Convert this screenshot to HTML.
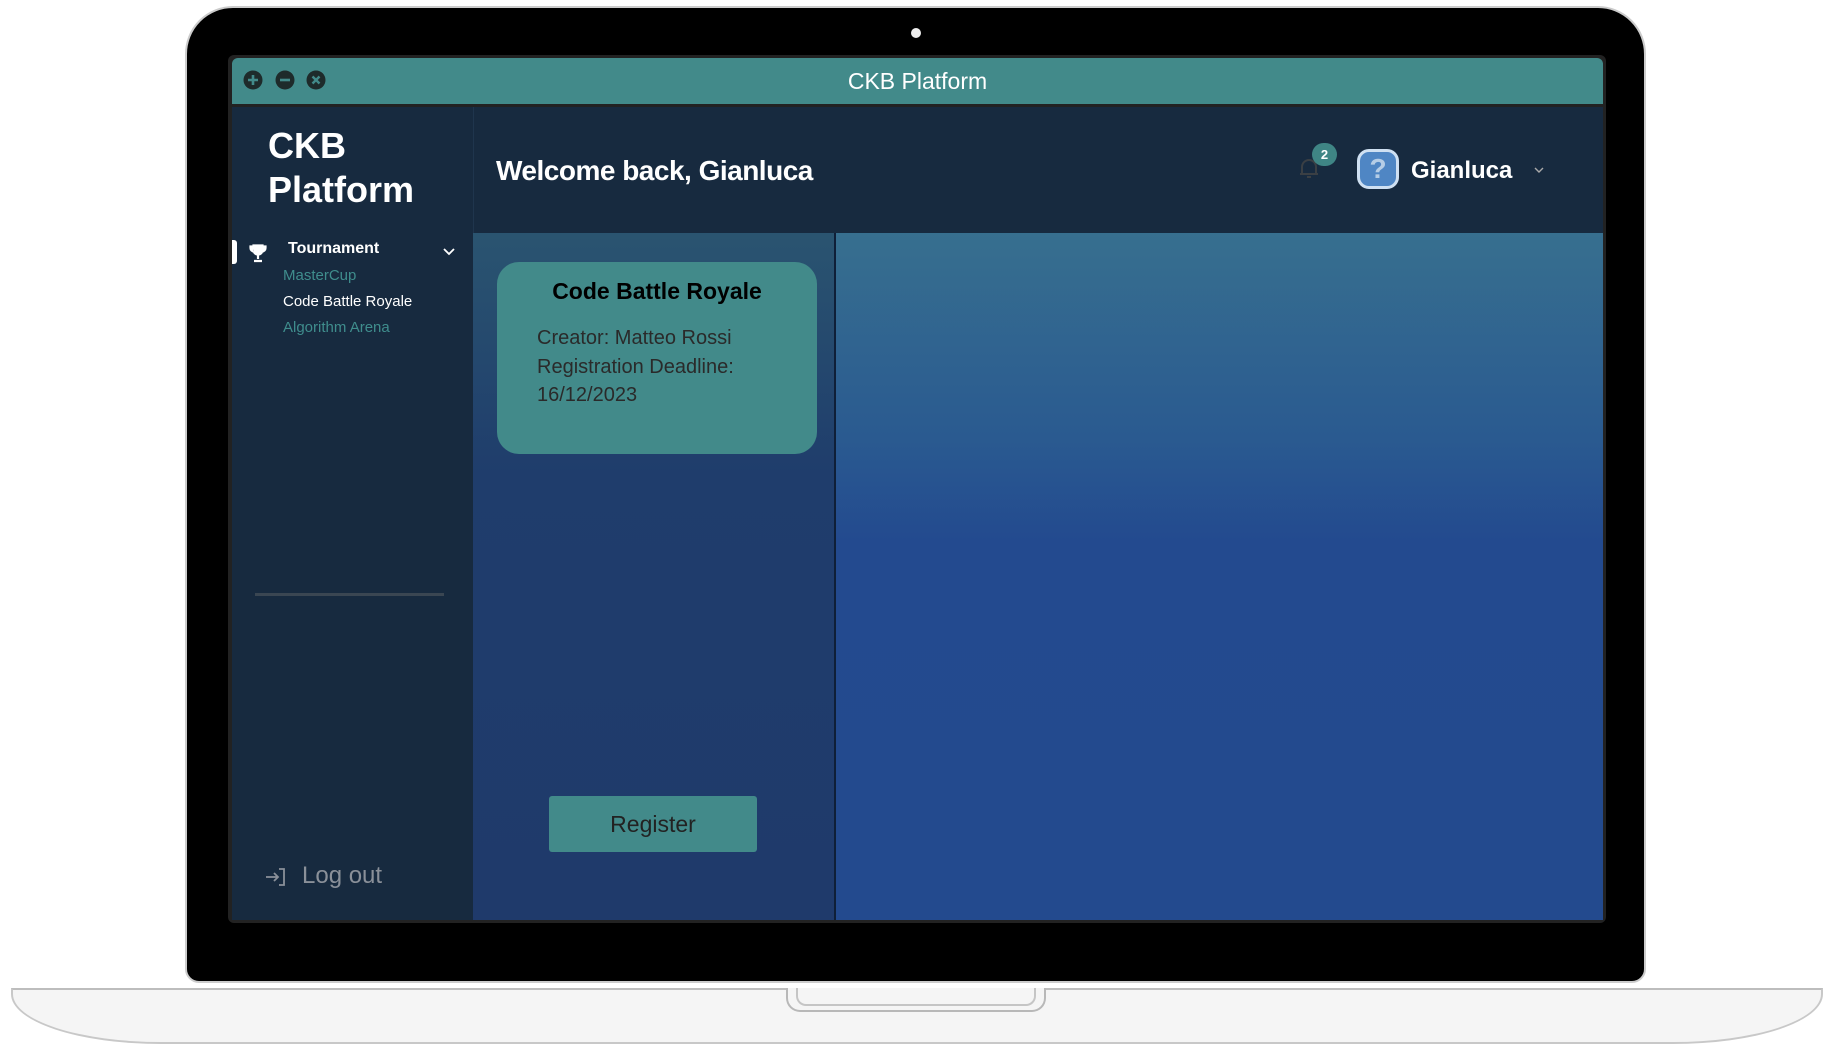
<!DOCTYPE html>
<html><head><meta charset="utf-8"><style>
*{margin:0;padding:0;box-sizing:border-box}
body{width:1832px;height:1046px;background:#fff;position:relative;overflow:hidden;font-family:"Liberation Sans",sans-serif}
.abs{position:absolute}
</style></head><body>
<div class="abs" style="left:11px;top:988px;width:1812px;height:56px;background:#f5f5f5;border:2px solid #c8c8c8;border-top:2px solid #bdbdbd;border-radius:0 0 150px 150px/0 0 50px 50px"></div>
<div class="abs" style="left:786px;top:988px;width:260px;height:24px;border:2px solid #b8b8b8;border-top:none;border-radius:0 0 14px 14px;background:#f5f5f5"></div>
<div class="abs" style="left:796px;top:988px;width:240px;height:18px;border:2px solid #c5c5c5;border-top:none;border-radius:0 0 10px 10px"></div>
<div class="abs" style="left:185px;top:6px;width:1461px;height:977px;background:#000;border-radius:48px 48px 14px 14px;border:2px solid #ccc"></div>
<div class="abs" style="left:911px;top:28px;width:10px;height:10px;border-radius:50%;background:#eee"></div>
<div class="abs" style="left:228px;top:55px;width:1378px;height:868px;background:#222;border-radius:6px"></div>
<div class="abs" style="left:232px;top:58px;width:1371px;height:46px;background:#428a8a;border-radius:6px 6px 0 0"></div>
<div class="abs" style="left:232px;top:58px;width:1371px;height:46px;color:#fff;font-size:23px;text-align:center;line-height:46px">CKB Platform</div>
<svg class="abs" style="left:242px;top:69px" width="90" height="22" viewBox="0 0 90 22">
<circle cx="11" cy="11" r="9.5" fill="#1e2b2b"/><path d="M11 6v10M6 11h10" stroke="#428a8a" stroke-width="2.6"/>
<circle cx="43" cy="11" r="9.5" fill="#1e2b2b"/><path d="M38 11h10" stroke="#428a8a" stroke-width="2.6"/>
<circle cx="74" cy="11" r="9.5" fill="#1e2b2b"/><path d="M70.5 7.5l7 7M77.5 7.5l-7 7" stroke="#428a8a" stroke-width="2.4"/>
</svg>
<div class="abs" style="left:232px;top:107px;width:241px;height:813px;background:#172a3f"></div>
<div class="abs" style="left:268px;top:124px;color:#fff;font-weight:bold;font-size:36px;line-height:44px">CKB<br>Platform</div>
<div class="abs" style="left:232px;top:240px;width:5px;height:24px;background:#fff;border-radius:0 3px 3px 0"></div>
<svg class="abs" style="left:248px;top:243px" width="20" height="20" viewBox="0 0 20 20"><path d="M5 2h10v5a5 5 0 0 1-10 0z M5 3H2v2a4 4 0 0 0 4 4 M15 3h3v2a4 4 0 0 1-4 4" fill="#fff" stroke="#fff" stroke-width="1.2"/><path d="M10 12v4M6 18h8" stroke="#fff" stroke-width="2.2"/></svg>
<div class="abs" style="left:288px;top:240px;color:#fff;font-weight:bold;font-size:16px">Tournament</div>
<svg class="abs" style="left:442px;top:247px" width="14" height="10" viewBox="0 0 14 10"><path d="M2 2l5 5 5-5" stroke="#fff" stroke-width="1.8" fill="none"/></svg>
<div class="abs" style="left:283px;top:267px;color:#3f8d8d;font-size:15px">MasterCup</div>
<div class="abs" style="left:283px;top:293px;color:#fff;font-size:15px">Code Battle Royale</div>
<div class="abs" style="left:283px;top:319px;color:#3f8d8d;font-size:15px">Algorithm Arena</div>
<div class="abs" style="left:255px;top:593px;width:189px;height:3px;background:#3a4652"></div>
<svg class="abs" style="left:264px;top:866px" width="24" height="22" viewBox="0 0 24 22"><path d="M2 11h12M10 7l4 4-4 4M15 3h5v16h-5" stroke="#8a9099" stroke-width="1.8" fill="none"/></svg>
<div class="abs" style="left:302px;top:862px;color:#8a9099;font-size:24px">Log out</div>
<div class="abs" style="left:473px;top:107px;width:1130px;height:126px;background:#172a3f;border-left:1px solid #1f354d"></div>
<div class="abs" style="left:496px;top:155px;color:#fff;font-weight:bold;font-size:28px;letter-spacing:-0.5px">Welcome back, Gianluca</div>
<svg class="abs" style="left:1298px;top:156px" width="22" height="24" viewBox="0 0 22 24"><path d="M4 18V11a7 7 0 0 1 14 0v7M2 18h18M9 21h4" stroke="#3a3f44" stroke-width="2" fill="none"/></svg>
<div class="abs" style="left:1312px;top:143px;width:25px;height:23px;border-radius:12px;background:#3f8585;color:#fff;font-size:13px;font-weight:bold;text-align:center;line-height:23px">2</div>
<div class="abs" style="left:1357px;top:149px;width:42px;height:40px;border-radius:12px;background:#4f86c4;border:3px solid #cfe0f2;color:#b5cde6;font-size:28px;font-weight:bold;text-align:center;line-height:34px">?</div>
<div class="abs" style="left:1411px;top:157px;color:#fff;font-weight:bold;font-size:24px">Gianluca</div>
<svg class="abs" style="left:1533px;top:166px" width="12" height="8" viewBox="0 0 12 8"><path d="M2 2l4 4 4-4" stroke="#aaa" stroke-width="1.4" fill="none"/></svg>
<div class="abs" style="left:473px;top:233px;width:361px;height:687px;background:linear-gradient(#2a5470,#1f3d6c 35%,#1f3a6b)"></div>
<div class="abs" style="left:834px;top:233px;width:2px;height:687px;background:#0f1f38"></div>
<div class="abs" style="left:836px;top:233px;width:767px;height:687px;background:linear-gradient(#376f8f,#2a5a90 30%,#234a8f 45%,#234a8e)"></div>
<div class="abs" style="left:497px;top:262px;width:320px;height:192px;background:#428a8a;border-radius:22px"></div>
<div class="abs" style="left:497px;top:278px;width:320px;text-align:center;font-weight:bold;font-size:23px;color:#000">Code Battle Royale</div>
<div class="abs" style="left:537px;top:324px;font-size:20px;line-height:28.5px;color:#2a2a2a">Creator: Matteo Rossi<br>Registration Deadline:<br>16/12/2023</div>
<div class="abs" style="left:549px;top:796px;width:208px;height:56px;background:#428a8a;border-radius:3px;color:#222;font-size:23px;text-align:center;line-height:56px">Register</div>
</body></html>
